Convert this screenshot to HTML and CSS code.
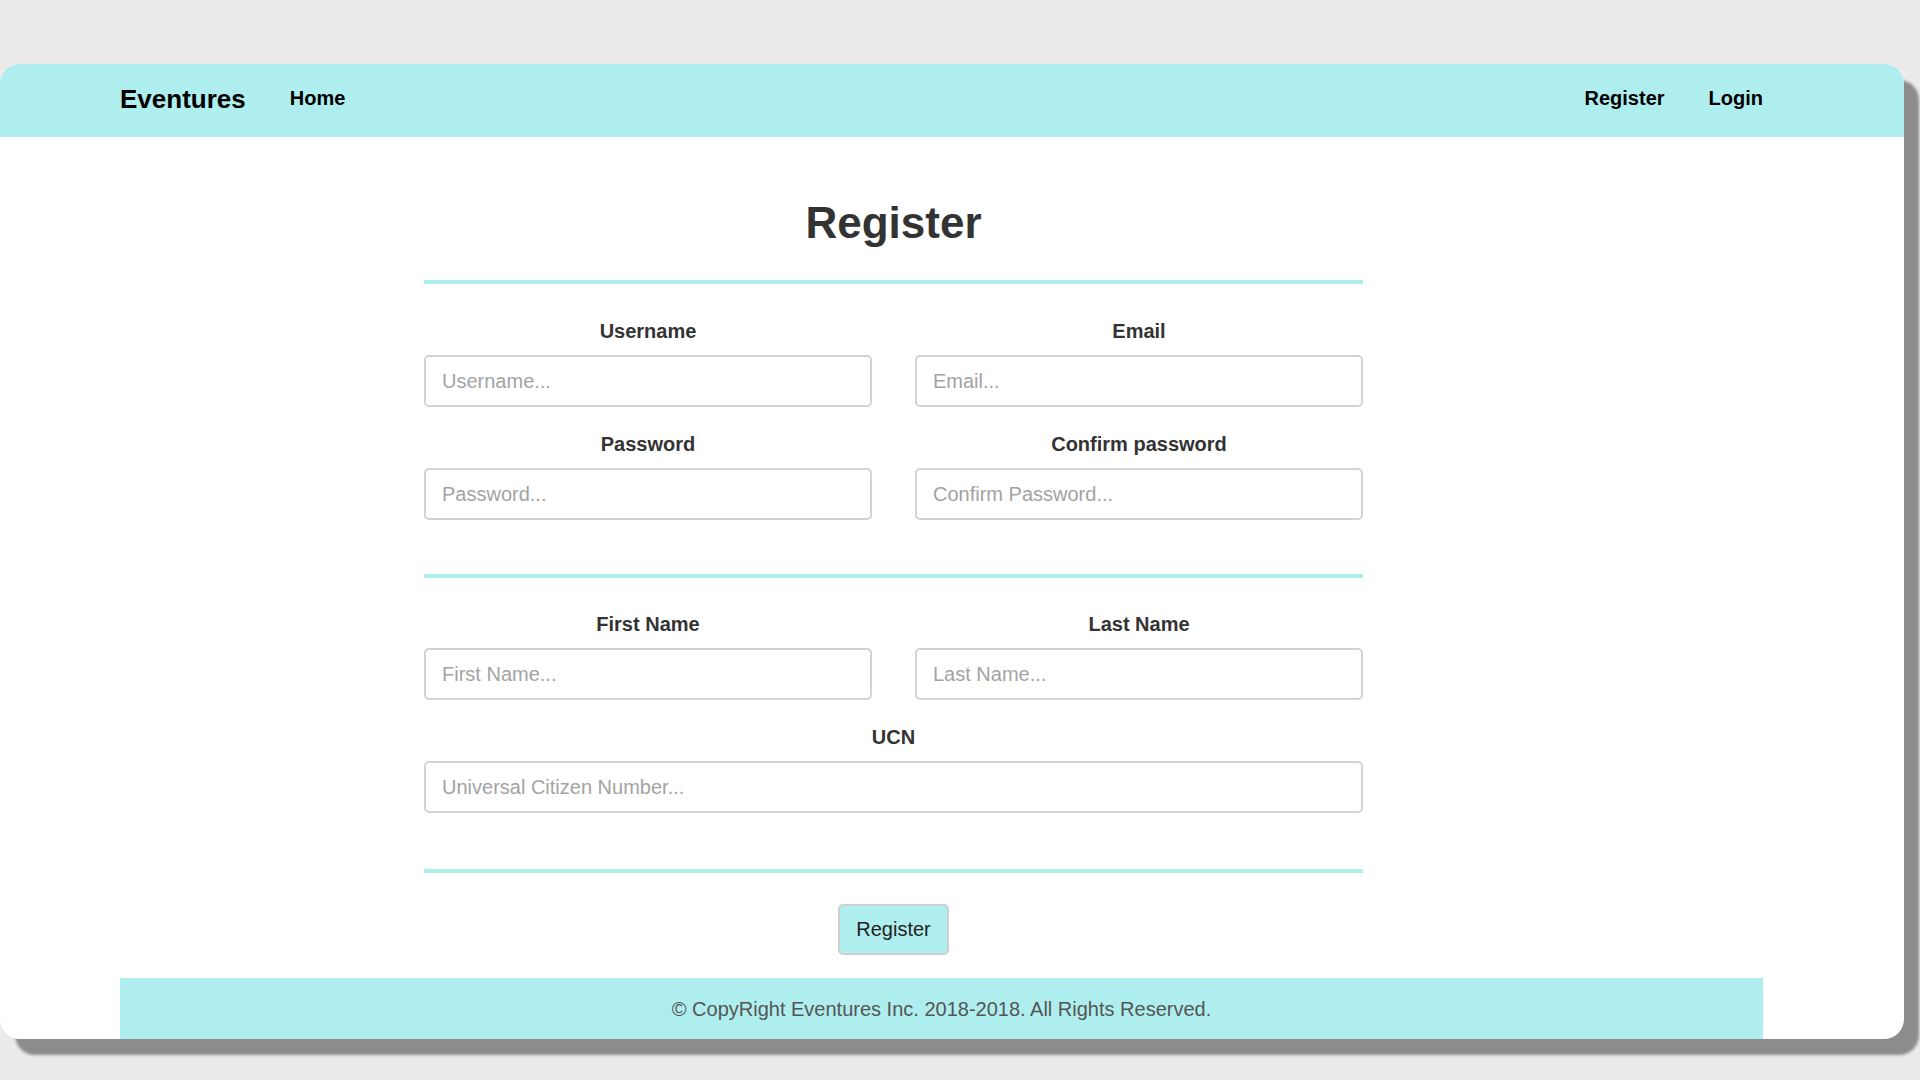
FILE: index.html
```html
<!DOCTYPE html>
<html lang="en">
<head>
<meta charset="utf-8">
<title>Register - Eventures</title>
<link rel="stylesheet" href="styles.css">
</head>
<body>
<div class="window">
  <header class="navbar">
    <div class="nav-inner">
      <div class="nav-left">
        <a class="brand" href="#">Eventures</a>
        <a class="nav-link" href="#">Home</a>
      </div>
      <div class="nav-right">
        <a class="nav-link" href="#">Register</a>
        <a class="nav-link" href="#">Login</a>
      </div>
    </div>
  </header>

  <main class="content">
    <form class="register-form">
      <h1 class="title">Register</h1>
      <hr class="divider divider-top">

      <div class="grid two">
        <div class="field">
          <label class="label" for="username">Username</label>
          <input class="input" id="username" type="text" placeholder="Username...">
        </div>
        <div class="field">
          <label class="label" for="email">Email</label>
          <input class="input" id="email" type="text" placeholder="Email...">
        </div>
        <div class="field">
          <label class="label" for="password">Password</label>
          <input class="input" id="password" type="password" placeholder="Password...">
        </div>
        <div class="field">
          <label class="label" for="confirm">Confirm password</label>
          <input class="input" id="confirm" type="password" placeholder="Confirm Password...">
        </div>
      </div>

      <hr class="divider divider-mid">

      <div class="grid two">
        <div class="field">
          <label class="label" for="first">First Name</label>
          <input class="input" id="first" type="text" placeholder="First Name...">
        </div>
        <div class="field">
          <label class="label" for="last">Last Name</label>
          <input class="input" id="last" type="text" placeholder="Last Name...">
        </div>
      </div>
      <div class="grid one">
        <div class="field">
          <label class="label" for="ucn">UCN</label>
          <input class="input" id="ucn" type="text" placeholder="Universal Citizen Number...">
        </div>
      </div>

      <hr class="divider divider-bottom">

      <div class="actions">
        <button class="btn" type="button">Register</button>
      </div>
    </form>
  </main>

  <footer class="footer">
    <p class="footer-text">© CopyRight Eventures Inc. 2018-2018. All Rights Reserved.</p>
  </footer>
</div>
</body>
</html>
```
FILE: styles.css
```css
* { box-sizing: border-box; }

html, body {
  margin: 0;
  padding: 0;
}

body {
  background: #ebebeb;
  height: 1080px;
  overflow: hidden;
  padding-top: 64px;
  font-family: "Liberation Sans", Arial, sans-serif;
}

.window {
  width: 1904px;
  height: 975px;
  background: #ffffff;
  border-radius: 20px;
  overflow: hidden;
  box-shadow: 15px 16px 3px #8c8c8c;
  display: flex;
  flex-direction: column;
}

/* Navbar */
.navbar {
  height: 73px;
  background: #afeeee;
  flex: 0 0 auto;
}

.nav-inner {
  margin-left: 120px;
  width: 1643px;
  height: 100%;
  display: flex;
  align-items: center;
  justify-content: space-between;
  padding-bottom: 4px;
}

.nav-left, .nav-right {
  display: flex;
  align-items: center;
  gap: 44px;
}

.brand {
  font-size: 26px;
  font-weight: bold;
  color: #000;
  text-decoration: none;
  padding-top: 2px;
}

.nav-link {
  font-size: 20px;
  font-weight: bold;
  color: #000;
  text-decoration: none;
}

/* Content */
.content {
  flex: 1 1 auto;
}

.register-form {
  margin-left: 424px;
  width: 939px;
  display: flex;
  flex-direction: column;
}

.title {
  margin: 64px 0 0;
  font-size: 44px;
  line-height: 44px;
  font-weight: bold;
  color: #333;
  text-align: center;
}

.divider {
  border: 0;
  height: 4px;
  background: #afeeee;
  margin: 0;
}

.divider-top { margin-top: 35px; }
.divider-mid { margin-top: 54px; }
.divider-bottom { margin-top: 56px; }

.grid {
  display: grid;
  column-gap: 43px;
  row-gap: 25px;
}

.grid.two { grid-template-columns: 1fr 1fr; }
.grid.one { grid-template-columns: 1fr; margin-top: 25px; }

.divider-top + .grid { margin-top: 35px; }
.divider-mid + .grid { margin-top: 34px; }

.field {
  display: flex;
  flex-direction: column;
  gap: 12px;
}

.label {
  display: block;
  text-align: center;
  font-size: 20px;
  line-height: 24px;
  font-weight: bold;
  color: #333;
}

.input {
  height: 52px;
  width: 100%;
  border: 2px solid #d3d3d3;
  border-radius: 5px;
  padding: 0 16px;
  font-family: "Liberation Sans", Arial, sans-serif;
  font-size: 20px;
  color: #333;
  background: #fff;
  outline: none;
}

.input::placeholder {
  color: #a3a3a3;
}

.actions {
  display: flex;
  justify-content: center;
  margin-top: 31px;
}

.btn {
  width: 111px;
  height: 51px;
  background: #afeeee;
  border: 2px solid #cfcfcf;
  border-radius: 5px;
  font-family: "Liberation Sans", Arial, sans-serif;
  font-size: 20px;
  color: #222;
  padding: 0;
}

/* Footer */
.footer {
  margin-left: 120px;
  width: 1643px;
  height: 61px;
  background: #afeeee;
  display: flex;
  align-items: center;
  justify-content: center;
  flex: 0 0 auto;
}

.footer-text {
  margin: 0;
  font-size: 20px;
  color: #555;
  padding-top: 1px;
}
```
